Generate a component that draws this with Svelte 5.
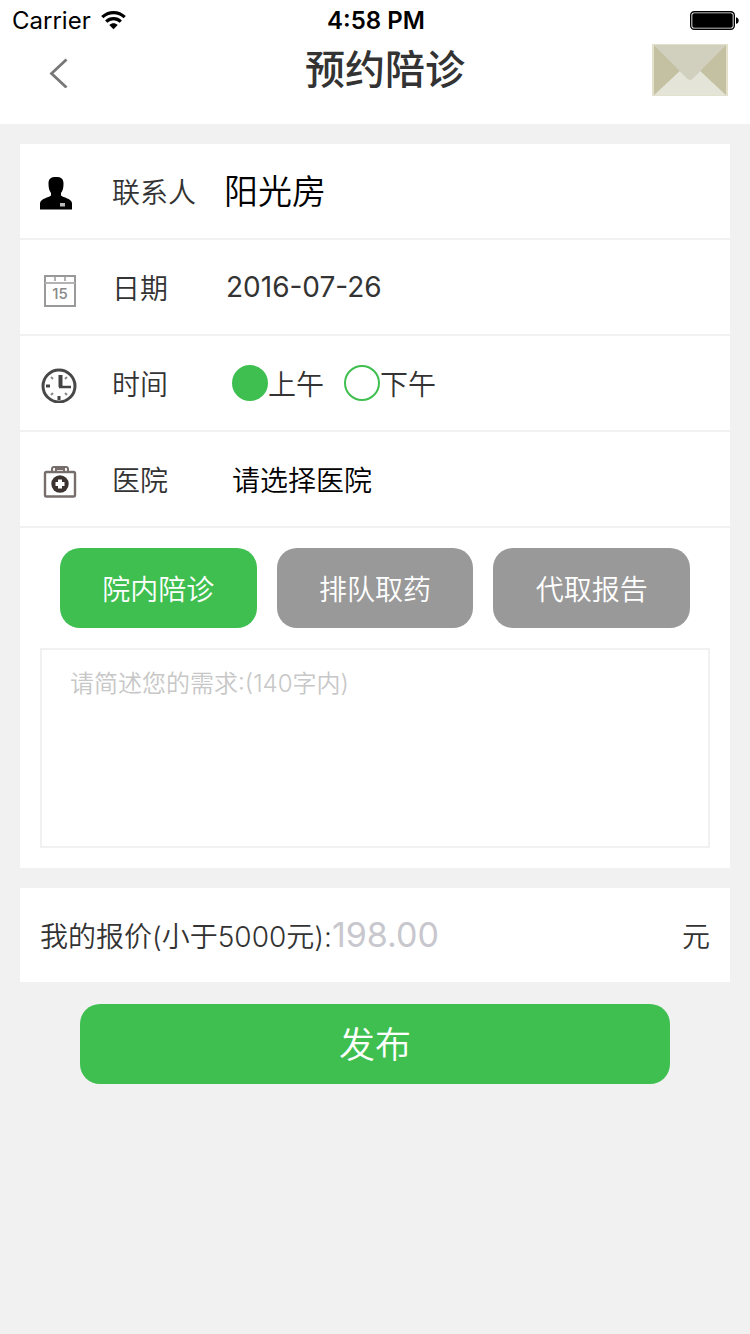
<script lang="ts">
  type Period = "am" | "pm";

  const periods: { id: Period; name: string }[] = [
    { id: "am", name: "上午" },
    { id: "pm", name: "下午" },
  ];
  const services = ["院内陪诊", "排队取药", "代取报告"];

  let contact = $state("阳光房");
  let date = $state("2016-07-26");
  let period: Period = $state("am");
  let hospital = $state("");
  let service = $state(services[0]);
  let demand = $state("");
  let price = $state("");
</script>

<div class="status-bar">
  <div class="carrier">
    <span>Carrier</span>
    <svg width="25" height="20" viewBox="0 0 25 20" aria-hidden="true">
      <g fill="none" stroke="#000" stroke-width="3.200">
        <path d="M1.300 7.200C7.500 1 17.500 1 23.700 7.200" />
        <path d="M5.200 11.600c4-4 10.600-4 14.600 0" />
      </g>
      <path d="M8.300 15c2.500-2.400 5.900-2.400 8.400 0l-4.200 4.200z" />
    </svg>
  </div>
  <span class="clock">4:58 PM</span>
  <svg class="battery" width="50" height="20" viewBox="0 0 50 20" aria-hidden="true">
    <rect x="0.700" y="1.700" width="43.600" height="17.600" rx="3.500" fill="none" stroke="#000" stroke-width="1.400" />
    <rect x="2.300" y="3.300" width="40.400" height="14.400" rx="1.800" />
    <path d="M46 7.200c3.600.6 3.600 6 0 6.600z" />
  </svg>
</div>

<header class="nav-bar">
  <button class="back" type="button" aria-label="返回">
    <svg width="20" height="36" viewBox="0 0 20 36">
      <path d="M18.500 7.500 3.500 21.500l15 14" fill="none" stroke="#777" stroke-width="2.800" />
    </svg>
  </button>
  <h1>预约陪诊</h1>
  <button class="mail" type="button" aria-label="消息">
    <svg width="76" height="52" viewBox="0 0 76 52">
      <rect width="76" height="52" fill="#e3e1cc" />
      <path d="M2 1v50l27-25zM74 1v50L47 26z" fill="#c3c1a2" />
      <path d="M3 51 28 27h20l25 24z" fill="#e4e4d9" />
      <path d="M2 1h72L40.500 35q-2.500 2-5 0z" fill="#d1cfbe" />
    </svg>
  </button>
</header>

<main>
  <section class="card">
    <div class="row">
      <svg class="icon" viewBox="0 0 40 40" aria-hidden="true">
        <path d="M8.500 12.500c0-5 2.500-6.500 7.500-6.500s7.500 1.500 7.500 6.500c0 4-.5 7-2.500 9.500v2.500c2 2 11 3 11 8v6H0v-6c0-5 9-6 11-8V22c-2-2.500-2.500-5.500-2.500-9.500z" />
        <path d="M20 32h5v3.500h-5z" fill="#bbb" />
      </svg>
      <label for="contact">联系人</label>
      <input id="contact" class="contact" type="text" bind:value={contact} />
    </div>

    <div class="row">
      <svg class="icon" viewBox="0 0 40 40" aria-hidden="true">
        <g fill="none" stroke="#999" stroke-width="2">
          <path d="M5 9h30v30H5z" />
          <path d="M5 16h30" stroke="#b4b4b4" />
          <path d="M15 10v4M25 10v4" stroke-width="1.500" />
        </g>
        <text x="20" y="32" text-anchor="middle" class="day">15</text>
      </svg>
      <label for="date">日期</label>
      <input id="date" class="date" type="text" bind:value={date} />
    </div>

    <div class="row">
      <svg class="icon" viewBox="0 0 40 40" aria-hidden="true">
        <circle cx="19" cy="23" r="16" fill="none" stroke="#484848" stroke-width="3" />
        <g fill="none" stroke="#444">
          <path d="M20.500 12v12" stroke-width="4" />
          <path d="M19 24h12" stroke-width="2.500" />
          <path d="M19 33v4M6 23h4" stroke-width="3" />
          <path d="m11 14 2 2M11 32l2-2M27 32l-2-2M27 14l-2 2" stroke="#888" stroke-width="2" />
        </g>
      </svg>
      <span class="label" id="time">时间</span>
      <div class="periods" role="radiogroup" aria-labelledby="time">
        {#each periods as item}
          <label class="period">
            <input type="radio" name="period" value={item.id} bind:group={period} />
            <span>{item.name}</span>
          </label>
        {/each}
      </div>
    </div>

    <div class="row">
      <svg class="icon" viewBox="0 0 40 40" aria-hidden="true">
        <g fill="none" stroke="#776e6c" stroke-width="2">
          <rect x="5" y="13" width="30" height="24.500" rx="1.500" stroke-width="2.400" />
          <path d="M12 13v-3q0-2 2-2h12q2 0 2 2v3M16 12v-2h8v2" />
        </g>
        <circle cx="20" cy="25" r="8.700" fill="#3c3230" />
        <path d="M18 20.500h4V23h2.500v4H22v2.500h-4V27h-2.500v-4H18z" fill="#fff" />
      </svg>
      <label for="hospital">医院</label>
      <select id="hospital" bind:value={hospital}>
        <option value="">请选择医院</option>
      </select>
    </div>

    <div class="details">
      <div class="services">
        {#each services as name}
          <button
            type="button"
            class="service"
            class:active={service === name}
            aria-pressed={service === name}
            onclick={() => (service = name)}
          >
            {name}
          </button>
        {/each}
      </div>
      <textarea
        aria-label="需求"
        maxlength="140"
        placeholder="请简述您的需求:(140字内)"
        bind:value={demand}
      ></textarea>
    </div>
  </section>

  <section class="card price">
    <label for="price">我的报价(小于5000元):</label>
    <input id="price" type="text" inputmode="decimal" placeholder="198.00" bind:value={price} />
    <span>元</span>
  </section>

  <button class="submit" type="button">发布</button>
</main>

<style>
  :global(body) {
    margin: 0;
    background: #f1f1f1;
    color: #333;
    font-family: Inter, "Noto Sans CJK SC", sans-serif;
    font-size: 28px;
    font-weight: 350;
  }

  button,
  input,
  select,
  textarea {
    box-sizing: border-box;
    margin: 0;
    padding: 0;
    border: none;
    border-radius: 0;
    background: none;
    color: inherit;
    font: inherit;
    outline: none;
  }

  button {
    cursor: pointer;
  }

  svg {
    display: block;
    flex-shrink: 0;
  }

  .status-bar {
    display: grid;
    grid-template-columns: 1fr auto 1fr;
    align-items: center;
    height: 40px;
    padding: 0 10px 0 12px;
    background: #fff;
    color: #000;
    font-size: 24px;
    font-weight: 400;
  }

  .carrier {
    display: flex;
    align-items: center;
    gap: 10px;
  }

  .clock {
    font-weight: 600;
  }

  .battery {
    justify-self: end;
  }

  .nav-bar {
    display: flex;
    align-items: center;
    padding: 4px 22px 28px 48px;
    background: #fff;
  }

  .back {
    width: 70px;
  }

  h1 {
    flex: 1;
    margin: 0;
    font-size: 40px;
    font-weight: 500;
    line-height: 52px;
    text-align: center;
  }

  main {
    display: flex;
    flex-direction: column;
    gap: 20px;
    padding: 20px;
  }

  .card {
    background: #fff;
  }

  .row {
    display: flex;
    align-items: center;
    height: 94px;
    padding: 0 20px;
    border-bottom: 2px solid #f1f1f1;
  }

  .icon {
    width: 40px;
    height: 40px;
    margin-right: 32px;
  }

  .day {
    fill: #888;
    font-size: 15px;
    font-weight: 500;
  }

  .row > label,
  .label {
    flex-shrink: 0;
    width: 112px;
  }

  .row > input,
  .row > select {
    flex: 1;
    min-width: 0;
    height: 60px;
  }

  .row > .contact {
    padding-bottom: 4px;
    color: #000;
    font-size: 34px;
  }

  .date {
    padding-left: 2px;
    font-weight: 400;
  }

  .periods {
    display: flex;
    gap: 20px;
    padding-left: 8px;
  }

  .period {
    display: flex;
    align-items: center;
  }

  .period input {
    width: 36px;
    height: 36px;
    border: 2px solid #3ebf50;
    border-radius: 50%;
    appearance: none;
  }

  .period input:checked {
    background: #3ebf50;
  }

  .row > select {
    padding: 4px 0 0 8px;
    color: #000;
    appearance: none;
  }

  .details {
    display: flex;
    flex-direction: column;
    gap: 20px;
    padding: 20px;
  }

  .services {
    display: grid;
    grid-template-columns: repeat(3, 1fr);
    gap: 20px;
    padding: 0 20px;
  }

  .service {
    height: 80px;
    border-radius: 20px;
    background: #999;
    color: #fff;
  }

  .service.active {
    background: #3ebf50;
  }

  textarea {
    width: 100%;
    height: 200px;
    padding: 16px 28px;
    border: 2px solid #f1f1f1;
    font-size: 24px;
    line-height: 36px;
    resize: none;
  }

  textarea::placeholder {
    color: #c7c7c7;
  }

  .price {
    display: flex;
    align-items: center;
    height: 94px;
    padding: 0 20px;
  }

  .price input {
    flex: 1;
    min-width: 0;
    padding-bottom: 2px;
    font-size: 34px;
    font-weight: 400;
  }

  .price input::placeholder {
    color: #c7c7cd;
  }

  .submit {
    height: 80px;
    margin: 2px 60px 0;
    padding-bottom: 4px;
    border-radius: 20px;
    background: #3ebf50;
    color: #fff;
    font-size: 36px;
  }
</style>
